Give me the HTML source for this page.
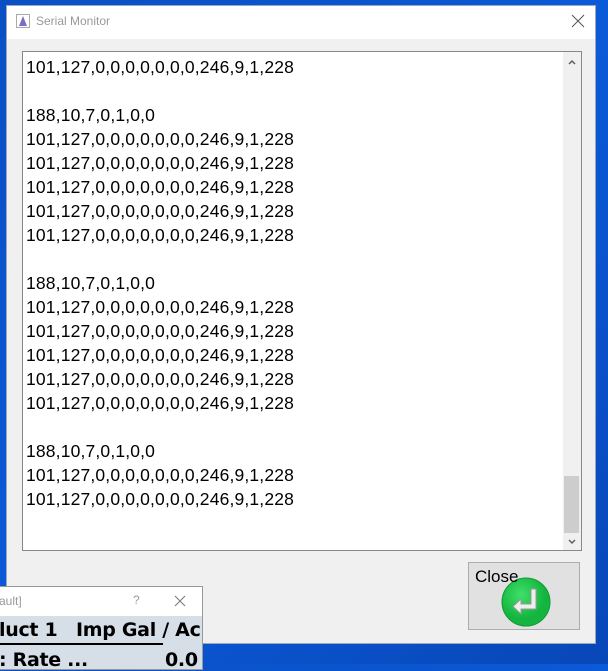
<!DOCTYPE html>
<html><head><style>
body{margin:0;width:608px;height:664px;overflow:hidden;position:relative;background:linear-gradient(135deg,#0a4fc4,#0b5ad8 50%,#0847b8);font-family:"Liberation Sans",Arial,sans-serif}
.win{position:absolute;left:6px;top:5px;width:590px;height:639px;background:#f0f0f0;border:1px solid #9aa8c0;box-sizing:border-box}
.tb{height:33px;background:#fff;position:relative}
.tb .t{position:absolute;left:29px;top:8px;font-size:12px;color:#999}
.ta{position:absolute;left:15px;top:45px;width:560px;height:500px;background:#fff;border:1px solid #888;box-sizing:border-box}
.txt{position:absolute;left:3px;top:3px;font-size:17.5px;letter-spacing:0.16px;line-height:24px;color:#000;white-space:pre}
.sb{position:absolute;right:0;top:0;width:18px;height:498px;background:#f0f0f0}
.th{position:absolute;left:1px;top:424px;width:15px;height:57px;background:#cdcdcd}
.btn{position:absolute;left:461px;top:556px;width:112px;height:68px;background:#e1e1e1;border:1px solid #adadad;box-sizing:border-box}
.sw{position:absolute;left:-2px;top:586px;width:205px;height:84px;background:#d6dfe8;border:1px solid #999;box-sizing:border-box}
.b{font-weight:bold;font-size:19px;position:absolute;white-space:nowrap;font-family:"DejaVu Sans","Liberation Sans",sans-serif;letter-spacing:-0.3px}
</style></head><body>
<div class="win">
 <div class="tb"><svg style="position:absolute;left:9px;top:8px" width="14" height="14"><rect x=".5" y=".5" width="13" height="13" fill="#fff" stroke="#aaa"/><path d="M7 2L11 12H3Z" fill="#7a6fc0"/></svg><span class="t">Serial Monitor</span><svg style="position:absolute;right:10px;top:8px" width="14" height="14"><path d="M1 1L13 13M13 1L1 13" stroke="#555" stroke-width="1"/></svg></div>
 <div class="ta"><div class="txt">101,127,0,0,0,0,0,0,0,246,9,1,228

188,10,7,0,1,0,0
101,127,0,0,0,0,0,0,0,246,9,1,228
101,127,0,0,0,0,0,0,0,246,9,1,228
101,127,0,0,0,0,0,0,0,246,9,1,228
101,127,0,0,0,0,0,0,0,246,9,1,228
101,127,0,0,0,0,0,0,0,246,9,1,228

188,10,7,0,1,0,0
101,127,0,0,0,0,0,0,0,246,9,1,228
101,127,0,0,0,0,0,0,0,246,9,1,228
101,127,0,0,0,0,0,0,0,246,9,1,228
101,127,0,0,0,0,0,0,0,246,9,1,228
101,127,0,0,0,0,0,0,0,246,9,1,228

188,10,7,0,1,0,0
101,127,0,0,0,0,0,0,0,246,9,1,228
101,127,0,0,0,0,0,0,0,246,9,1,228</div>
 <div class="sb"><svg width="18" height="18" style="position:absolute;top:2px"><path d="M6 10L9 7L12 10" fill="none" stroke="#606060" stroke-width="1.5"/></svg><div class="th"></div><svg width="18" height="18" style="position:absolute;top:481px"><path d="M6 7L9 10L12 7" fill="none" stroke="#606060" stroke-width="1.5"/></svg></div>
 </div>
 <div class="btn"><svg style="position:absolute;left:31px;top:13px" width="52" height="52"><defs><radialGradient id="g" cx="40%" cy="35%"><stop offset="0" stop-color="#3ee06a"/><stop offset="1" stop-color="#14b53e"/></radialGradient></defs><circle cx="26" cy="26" r="24" fill="url(#g)" stroke="#109a34"/><path d="M31 13h5v20H21v5l-8-7.5 8-7.5v5h10z" fill="#eee" stroke="#999"/></svg><span style="position:absolute;left:6px;top:4px;font-size:17px">Close</span></div>
</div>
<div class="sw">
 <div style="height:29px;background:#fff;position:relative;font-size:12px;color:#999"><span style="position:absolute;left:0;top:7px">ault]</span><span style="position:absolute;left:134px;top:6px">?</span><svg style="position:absolute;left:175px;top:8px" width="12" height="12"><path d="M1 1L11 11M11 1L1 11" stroke="#777"/></svg></div>
 <div class="b" style="left:0;top:32px">luct 1</div>
 <div class="b" style="left:77px;top:32px">Imp Gal / Ac</div>
 <div style="position:absolute;left:0;top:56px;width:164px;height:2px;background:#000"></div>
 <div class="b" style="left:0;top:62px">: Rate ...</div>
 <div class="b" style="left:166px;top:62px">0.0</div>
</div>
</body></html>
